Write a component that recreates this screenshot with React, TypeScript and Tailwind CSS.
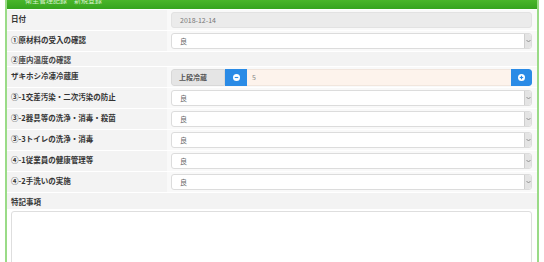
import React from 'react';

const selectRows = [
  '③-1交差汚染・二次汚染の防止',
  '③-2器具等の洗浄・消毒・殺菌',
  '③-3トイレの洗浄・消毒',
  '④-1従業員の健康管理等',
  '④-2手洗いの実施',
];

const ChevronBox = () => (
  <div className="w-[7px] h-full bg-[#e4e4e4] border-l border-[#cfcfcf] flex items-center justify-center rounded-r-[2px]">
    <svg width="5" height="4" viewBox="0 0 5 4">
      <path d="M0.5 1 L2.5 3 L4.5 1" fill="none" stroke="#888" strokeWidth="0.9" />
    </svg>
  </div>
);

const SelectBox = ({ value }: { value: string }) => (
  <div className="flex-1 h-[16px] bg-white border border-[#dcdcdc] rounded-[3px] flex items-center justify-between overflow-hidden">
    <span className="pl-[8px] text-[7px] text-[#666]">{value}</span>
    <ChevronBox />
  </div>
);

const Row = ({ label, children }: { label: string; children: React.ReactNode }) => (
  <div className="flex h-[21px] border-b border-white">
    <div className="w-[160px] bg-[#f3f3f3] pl-[4px] pt-[4px] text-[7.5px] font-bold text-[#333] leading-[10px]">
      {label}
    </div>
    <div className="flex-1 flex items-center pl-[4px] pr-[5px] bg-[#f9f9f9]">{children}</div>
  </div>
);

const CircleIcon = ({ plus }: { plus?: boolean }) => (
  <svg width="7" height="7" viewBox="0 0 10 10">
    <circle cx="5" cy="5" r="5" fill="#fff" />
    <rect x="2.5" y="4.2" width="5" height="1.6" fill="#2a8be6" />
    {plus && <rect x="4.2" y="2.5" width="1.6" height="5" fill="#2a8be6" />}
  </svg>
);

export default function App() {
  return (
    <div className="w-[544px] h-[262px] overflow-hidden bg-white font-['Noto_Sans_CJK_JP','Noto_Sans',sans-serif]">
      <div className="ml-[5px] w-[534px] h-full border-l-2 border-r-2 border-[#9adb87]">
        <div className="h-[9px] bg-gradient-to-b from-[#49b62a] to-[#35a41e] overflow-hidden">
          <div className="pl-[18px] -mt-[5px] text-[7px] text-[#d7f0cc] leading-[10px]">衛生管理記録　新規登録</div>
        </div>
        <div className="h-[1px]" />
        <Row label="日付">
          <div className="flex-1 h-[16px] bg-[#ebebeb] border border-[#e2e2e2] rounded-[3px] flex items-center pl-[8px] text-[7px] text-[#777]">
            2018-12-14
          </div>
        </Row>
        <Row label="①原材料の受入の確認">
          <SelectBox value="良" />
        </Row>
        <div className="h-[15px] bg-[#f3f3f3] border-b border-white pl-[4px] pt-[3px] text-[7.5px] font-bold text-[#444] leading-[10px]">
          ②庫内温度の確認
        </div>
        <Row label="ザキホシ冷凍冷蔵庫">
          <div className="flex-1 h-[17px] flex rounded-[3px] overflow-hidden">
            <div className="w-[54px] bg-[#e5e5e5] border border-[#d8d8d8] rounded-l-[3px] flex items-center pl-[7px] text-[7px] font-bold text-[#555]">
              上段冷蔵
            </div>
            <div className="w-[22px] bg-[#2a8be6] flex items-center justify-center">
              <CircleIcon />
            </div>
            <div className="flex-1 bg-[#fdf3ec] border-y border-[#f1e6de] flex items-center pl-[5px] text-[7px] text-[#888]">5</div>
            <div className="w-[21px] bg-[#2a8be6] flex items-center justify-center rounded-r-[3px]">
              <CircleIcon plus />
            </div>
          </div>
        </Row>
        {selectRows.map((label) => (
          <Row key={label} label={label}>
            <SelectBox value="良" />
          </Row>
        ))}
        <div className="h-[17px] bg-[#f3f3f3] border-b border-white pl-[4px] pt-[4px] text-[7.5px] font-bold text-[#333] leading-[10px]">
          特記事項
        </div>
        <div className="px-[4px] pt-[1px] pr-[5px]">
          <div className="h-[80px] bg-white border border-[#dedede] rounded-[3px]" />
        </div>
      </div>
    </div>
  );
}
